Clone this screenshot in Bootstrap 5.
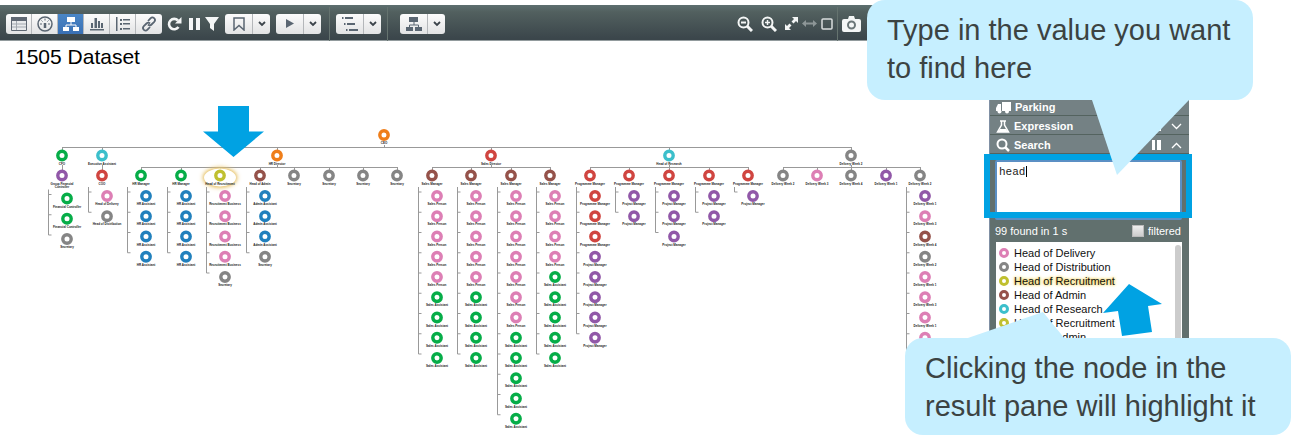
<!DOCTYPE html>
<html lang="en">
<head>
<meta charset="utf-8">
<meta name="viewport" content="width=device-width, initial-scale=1">
<title>1505 Dataset</title>
<link href="https://cdn.jsdelivr.net/npm/bootstrap@5.3.0/dist/css/bootstrap.min.css" rel="stylesheet">
<style>
  body { font-family: "Liberation Sans", Arial, sans-serif; background: #fff; color: #000; }
  svg { display: block; }
  .stage { padding: 5px 102px 0 0; min-height: 100vh; overflow: hidden; }

  /* toolbar */
  .toolbar { height: 36px; padding: 2px 328px 0 6px; background: linear-gradient(#5d6f6f, #52605f 20%, #3b464b 95%); border-bottom: 1px solid #929b9d; }
  .toolbar .btn { height: 20px; padding: 0; display: flex; align-items: center; justify-content: center; border: 0; border-right: 1px solid #b4b7ba; border-radius: 0; background: linear-gradient(#fcfcfc, #e2e3e4); color: #5a6672; }
  .toolbar .btn-group { border-radius: 3px; overflow: hidden; }
  .toolbar .btn-group > .btn + .btn.btn { margin-left: 0; }
  .toolbar .btn-group .btn:last-child { border-right: 0; }
  .toolbar .btn.active { background: linear-gradient(#4a86c6, #3a70b4); color: #fff; }
  .tool { width: 26px; flex: none; }
  .tool-main { width: 28px; flex: none; }
  .tool-drop { width: 17px; flex: none; }
  .toolbar .bare { background: none; border: 0; color: #f4f6f6; }
  .divider { width: 1px; height: 34px; background: #65736f; }
  .near { margin-left: 6px; }
  .apart { margin-left: 12px; }

  /* chart */
  .chart-title { font-size: 21px; line-height: 24px; height: 59px; padding: 4px 0 0 15px; margin: 0; }
  .chart { min-width: 0; }
  .chart text { font: bold 3px "Liberation Sans", Arial, sans-serif; text-anchor: middle; fill: #222; }
  .chart .link-line { fill: none; stroke: #999; stroke-width: 1; }
  .halo { fill: #fff; filter: drop-shadow(0 0 2px #e3b84c) drop-shadow(0 0 2px #ecd08a); }

  /* side panel */
  .side { width: 200px; flex: none; margin-top: 56px; color: #fff; font-size: 11px; background: #61706e; border-left: 1px solid #8090a4; align-self: flex-start; }
  .side-head { height: 19px; padding: 2px 7px 0 6px; font-weight: bold; background: #748184; border-bottom: 1px solid #54635f; }
  .side-head button { color: #fff; background: none; border: 0; padding: 0; }
  .search-box { padding: 6px 7px 0 5px; }
  .query { display: block; width: 100%; height: 60px; resize: none; padding: 4px 2px; border: 2px solid #5b8fc4; border-radius: 2px; font: 11px/13px "Liberation Mono", monospace; color: #222; outline: 0; }
  .caret { left: 36px; top: 12px; width: 1px; height: 11px; background: #000; }
  .focus-frame { left: -6px; right: -3px; top: 0; height: 64px; border: 6px solid #00a2e3; }
  .status { height: 22px; padding: 0 8px 0 5px; line-height: 22px; }
  .filter-check { appearance: none; width: 12px; height: 12px; margin: 0; background: linear-gradient(#eee, #ccc); border: 1px solid #bbb; }
  .hits { height: 120px; margin: 0 7px 0 6px; padding: 4px 0 0 3px; background: #fff; color: #111; overflow: hidden; }
  .hits a { display: flex; align-items: center; gap: 5px; line-height: 14px; height: 14px; color: #111; text-decoration: none; }
  .hits a::before { content: ""; width: 10px; height: 10px; border: 3px solid var(--ring); border-radius: 50%; }
  .hits a.picked span { text-shadow: 0 0 2px #f0d050, 0 0 3px #f4dc80, 0 0 4px #f4dc80; }
  .thumb { right: 8px; top: 148px; width: 6px; height: 112px; border-radius: 3px; background: #ccc; }
  .pointer { left: 112px; top: 187px; }

  /* callouts */
  .callout { width: 386px; padding: 11px 20px; font-size: 29px; line-height: 38px; color: #3c4342; background: #c6efff; border-radius: 18px; z-index: 5; }
  .callout-type { right: 38px; top: 0; height: 100px; }
  .callout-click { right: 0; top: 338px; height: 97px; }
  .callout svg { fill: #c6efff; }
  .tail-down { left: 225px; top: 99px; }
  .tail-up { left: 60px; top: -26px; }
</style>
</head>
<body>
<div class="stage position-relative">
  <header class="toolbar d-flex align-items-center">
    <div class="btn-group">
      <button class="btn tool" aria-label="Table"><svg width="16" height="14"><path d="M.5.5h15v13H.5z" fill="#e8eaec" stroke="#5f6873"/><path d="M0 0h16v4H0z" fill="#5f6873"/><path d="M1 7h14M1 10h14M5.500 4v9" stroke="#a2a8af"/></svg></button>
      <button class="btn tool" aria-label="Dashboard"><svg width="16" height="16" fill="none" stroke="currentColor"><circle cx="8" cy="8" r="7" stroke-width="1.500"/><path d="M8 7v5" stroke-width="2.500"/><path d="M8 2.500v2M3 8h2M11 8h2M4.500 4.500l1 1M11.500 4.500l-1 1"/></svg></button>
      <button class="btn tool active" aria-label="Chart"><svg width="16" height="14" fill="currentColor"><path d="M4 0h8v5H4zM0 10h6v4H0zM10 10h6v4h-6z"/><path d="M8 5v3M3 10V8h10v2" fill="none" stroke="currentColor"/></svg></button>
      <button class="btn tool" aria-label="Bars"><svg width="14" height="14" fill="currentColor"><path d="M0 12h14v1.500H0zM1 6h2v5H1zM4.500 1h2.500v10H4.500zM8 4h2v7H8zM11 6h2v5h-2z"/></svg></button>
      <button class="btn tool" aria-label="List"><svg width="16" height="14" fill="currentColor"><path d="M1 0h1.500v14H1zM5 2h2v2H5zM5 6h2v2H5zM5 11h2v2H5zM8 2h7v1.500H8zM8 6h7v1.500H8zM8 11h7v1.500H8z"/></svg></button>
      <button class="btn tool" aria-label="Link"><svg width="16" height="16" viewBox="0 0 16 16" fill="none" stroke="currentColor" stroke-width="1.800"><path d="M7 5l2.500-2.700a2.500 2.500 0 013.700 3.500L10.500 8.500a2.500 2.500 0 01-3.500 0M9 11l-2.500 2.700a2.500 2.500 0 01-3.700-3.500L5.500 7.500a2.500 2.500 0 013.500 0"/></svg></button>
    </div>
    <button class="btn bare ms-1" aria-label="Refresh"><svg width="17" height="16" viewBox="0 0 17 16"><path d="M12.500 11A5.200 5.200 0 1112 4.500" fill="none" stroke="currentColor" stroke-width="2.600"/><path d="M15.500 1v6.500H9z" fill="currentColor"/></svg></button>
    <button class="btn bare ms-1" aria-label="Pause"><svg width="14" height="12" fill="currentColor"><path d="M2 0h4v12H2zM9 0h4v12H9z"/></svg></button>
    <button class="btn bare ms-1" aria-label="Filter"><svg width="14" height="14" fill="currentColor"><path d="M0 0h14L9 7v7l-4-3V7z"/></svg></button>
    <div class="btn-group near">
      <button class="btn tool-main" aria-label="Bookmark"><svg width="12" height="14" fill="none" stroke="currentColor" stroke-width="1.500"><path d="M1 1h10v12L6 8.500 1 13z"/></svg></button>
      <button class="btn tool-drop" aria-label="Bookmarks"><svg width="8" height="6"><path d="M1 1l3 3 3-3" fill="none" stroke="#3c444b" stroke-width="1.800"/></svg></button>
    </div>
    <div class="btn-group near">
      <button class="btn tool-main" aria-label="Play"><svg width="8" height="9" fill="currentColor"><path d="M0 0l8 4.500L0 9z"/></svg></button>
      <button class="btn tool-drop" aria-label="Play options"><svg width="8" height="6"><path d="M1 1l3 3 3-3" fill="none" stroke="#3c444b" stroke-width="1.800"/></svg></button>
    </div>
    <div class="divider ms-2"></div>
    <div class="btn-group near">
      <button class="btn tool-main" aria-label="Outline"><svg width="16" height="14" fill="currentColor"><path d="M0 0h1.500v2H0zM3 0h8v2H3zM2 6h1.500v2H2zM5 6h8v2H5zM4 12h1.500v2H4zM7 12h9v2H7z"/></svg></button>
      <button class="btn tool-drop" aria-label="Outline levels"><svg width="8" height="6"><path d="M1 1l3 3 3-3" fill="none" stroke="#3c444b" stroke-width="1.800"/></svg></button>
    </div>
    <div class="divider near"></div>
    <div class="btn-group apart">
      <button class="btn tool-main" aria-label="Layout"><svg width="16" height="14" fill="currentColor"><path d="M3 0h9v5H3zM0 10h7v4H0zM9 10h7v4H9z"/><path d="M8 5v3M3.500 10V8h9v2" fill="none" stroke="currentColor"/></svg></button>
      <button class="btn tool-drop" aria-label="Layouts"><svg width="8" height="6"><path d="M1 1l3 3 3-3" fill="none" stroke="#3c444b" stroke-width="1.800"/></svg></button>
    </div>
    <div class="d-flex align-items-center ms-auto">
      <button class="btn bare me-2" aria-label="Zoom out"><svg width="16" height="16" fill="none" stroke="currentColor" stroke-width="2"><circle cx="6.500" cy="6.500" r="5"/><path d="M4 6.500h5"/><path d="M10 10l5 5" stroke-width="3"/></svg></button>
      <button class="btn bare me-2" aria-label="Zoom in"><svg width="16" height="16" fill="none" stroke="currentColor" stroke-width="2"><circle cx="6.500" cy="6.500" r="5"/><path d="M4 6.500h5M6.500 4v5" stroke-width="1.500"/><path d="M10 10l5 5" stroke-width="3"/></svg></button>
      <button class="btn bare me-1" aria-label="Fit"><svg width="13" height="13" fill="currentColor"><path d="M7 0h6v6l-2-2-2.500 2.500-2-2L9 2zM6 13H0V7l2 2 2.500-2.500 2 2L4 11z"/></svg></button>
      <button class="btn bare" aria-label="Fit width"><svg width="15" height="7" fill="#8d9697"><path d="M0 3.500L4 0v2.500h7V0l4 3.500L11 7V4.500H4V7z"/></svg></button>
      <button class="btn bare ms-1" aria-label="Full screen"><svg width="12" height="12"><rect x="1" y="1" width="10" height="10" rx="1" fill="none" stroke="#d9dddd" stroke-width="1.500"/></svg></button>
      <div class="divider mx-1"></div>
      <button class="btn bare" aria-label="Snapshot"><svg width="19" height="16"><path d="M2 3h4l1-3h5l1 3h4a2 2 0 012 2v9a2 2 0 01-2 2H2a2 2 0 01-2-2V5a2 2 0 012-2z" fill="currentColor"/><circle cx="9.500" cy="9" r="3.500" fill="none" stroke="#6b7678" stroke-width="2"/></svg></button>
    </div>
  </header>

  <main class="d-flex">
    <section class="chart flex-grow-1">
      <h1 class="chart-title">1505 Dataset</h1>
      <svg id="tree" viewBox="0 100 989 341" width="100%" role="img" aria-label="Organisation chart"></svg>
    </section>

    <aside class="side position-relative">
      <div class="side-head d-flex align-items-center gap-1">
        <svg width="15" height="13" fill="#fff"><path d="M15 1v9H6V1zM5 3v7H0V7l2-4z"/><circle cx="3.500" cy="10.500" r="2"/><circle cx="11" cy="10.500" r="2"/></svg>
        <span>Parking</span>
      </div>
      <div class="side-head d-flex align-items-center gap-1">
        <svg width="14" height="13" fill="none" stroke="#fff" stroke-width="1.500"><path d="M4 1h6M5.500 1v4L1.500 12h11L8.500 5V1"/><path d="M4 9h6l2 3H2z" fill="#fff" stroke="none"/></svg>
        <span>Expression</span>
        <button class="ms-auto me-1" aria-label="Pause expression"><svg width="12" height="10" fill="#fff"><path d="M1 0h3v10H1zM6 0h4v10H6z"/></svg></button>
        <button aria-label="Expand expression"><svg width="11" height="7"><path d="M1 1l4.500 4.500L10 1" fill="none" stroke="#fff" stroke-width="1.300"/></svg></button>
      </div>
      <div class="side-head d-flex align-items-center gap-1">
        <svg width="14" height="14" fill="none" stroke="#fff" stroke-width="2"><circle cx="6" cy="6" r="4.500"/><path d="M9.500 9.500L13 13" stroke-width="2.500"/></svg>
        <label for="query">Search</label>
        <button class="ms-auto me-1" aria-label="Pause search"><svg width="12" height="10" fill="#fff"><path d="M1 0h3v10H1zM6 0h4v10H6z"/></svg></button>
        <button aria-label="Collapse search"><svg width="11" height="7"><path d="M1 6l4.500-4.500L10 6" fill="none" stroke="#fff" stroke-width="1.300"/></svg></button>
      </div>
      <div class="position-relative">
        <div class="search-box"><textarea class="query" id="query" spellcheck="false">head</textarea></div>
        <div class="caret position-absolute"></div>
        <div class="focus-frame position-absolute pe-none"></div>
      </div>
      <div class="status d-flex align-items-center">
        <span>99 found in 1 s</span>
        <input class="filter-check ms-auto me-1" type="checkbox" id="filtered"><label for="filtered">filtered</label>
      </div>
      <nav class="hits" aria-label="Results">
        <a href="#" style="--ring:#dd7fb5"><span>Head of Delivery</span></a>
        <a href="#" style="--ring:#858585"><span>Head of Distribution</span></a>
        <a href="#" class="picked" style="--ring:#c0c030"><span>Head of Recruitment</span></a>
        <a href="#" style="--ring:#95524a"><span>Head of Admin</span></a>
        <a href="#" style="--ring:#3cbfcb"><span>Head of Research</span></a>
        <a href="#" style="--ring:#c0c030"><span>Head of Recruitment</span></a>
        <a href="#" style="--ring:#95524a"><span>Head of Admin</span></a>
      </nav>
      <div class="thumb position-absolute"></div>
      <svg class="pointer position-absolute" width="60" height="53" fill="#00a2e3"><path d="M27 0L60 20 46 22 50 48 20 52 16 27 1 29z"/></svg>
    </aside>
  </main>

  <div class="callout callout-type position-absolute">Type in the value you want to find here
    <svg class="tail-down position-absolute" width="97" height="76"><path d="M0 0h97v1L25 76 0 1z"/></svg>
  </div>
  <div class="callout callout-click position-absolute">Clicking the node in the result pane will highlight it
    <svg class="tail-up position-absolute" width="105" height="27"><path d="M0 27L78 0l22 27z"/></svg>
  </div>
</div>

<script src="https://cdn.jsdelivr.net/npm/bootstrap@5.3.0/dist/js/bootstrap.bundle.min.js"></script>
<script>
  const C = { green: '#06ad48', teal: '#3cbfcb', orange: '#ef7e1a', red: '#d04540', grey: '#858585', purple: '#9158a8', blue: '#2180bd', olive: '#c0c030', brown: '#95524a', pink: '#dd7fb5' };
  const rep = (n, color, label) => Array(n).fill([color, label]);
  const delivery = (color, n) => [color, 'Delivery Week ' + n];
  // each branch: x, colour, label, then its columns: x, colour, label, stacked reports, whether the stack goes on
  const branches = [
    [62, 'green', 'CFO', [[62, 'purple', 'Group Financial|Controller', [...rep(2, 'green', 'Financial Controller'), ['grey', 'Secretary']]]]],
    [102, 'teal', 'Executive Assistant', [[102, 'red', 'COO', [['pink', 'Head of Delivery'], ['grey', 'Head of Distribution']]]]],
    [277, 'orange', 'HR Director', [
      [141, 'green', 'HR Manager', rep(4, 'blue', 'HR Assistant')],
      [181, 'green', 'HR Manager', rep(4, 'blue', 'HR Assistant')],
      [220, 'olive', 'Head of Recruitment', [...rep(4, 'pink', 'Recruitment Business'), ['grey', 'Secretary']]],
      [260, 'brown', 'Head of Admin', [...rep(3, 'blue', 'Admin Assistant'), ['grey', 'Secretary']]],
      ...[294, 329, 363, 397].map(x => [x, 'grey', 'Secretary', []])]],
    [491, 'red', 'Sales Director', [[432, 5, 4], [471, 5, 4], [511, 7, 5], [550, 4, 5]].map(([x, p, a]) =>
      [x, 'brown', 'Sales Manager', [...rep(p, 'pink', 'Sales Person'), ...rep(a, 'green', 'Sales Assistant')]])],
    [669, 'teal', 'Head of Research', [[590, 3, 5], [629, 0, 2], [669, 0, 3], [709, 0, 2], [748, 0, 1]].map(([x, g, p]) =>
      [x, 'red', 'Programme Manager', [...rep(g, 'red', 'Programme Manager'), ...rep(p, 'purple', 'Project Manager')]])],
    [851, 'grey', 'Delivery Week 2', [
      [783, ...delivery('grey', 2), []], [817, ...delivery('pink', 3), []], [851, ...delivery('grey', 4), []], [886, ...delivery('purple', 1), []],
      [920, ...delivery('grey', 2), [['purple', 1], ['pink', 3], ['brown', 4], ['grey', 2], ['pink', 1], ['pink', 3], ['pink', 1], ['pink', 3]].map(d => delivery(...d)), true]]]
  ];
  let lines = '', nodes = '';
  const line = d => lines += `<path class="link-line" d="${d}"/>`;
  const node = (x, y, color, label) => {
    if (label === 'Head of Recruitment') nodes += `<ellipse class="halo" cx="${x}" cy="${y + 2}" rx="16" ry="9"/>`;
    nodes += `<circle cx="${x}" cy="${y}" r="4.2" fill="#fff" stroke="${C[color]}" stroke-width="3.4"/>`;
    label.split('|').forEach((t, i) => nodes += `<text x="${x}" y="${y + 9 + i * 3}">${t}</text>`);
  };
  line('M62 147.500H852');
  line('M384.500 145v3');
  node(384, 135, 'orange', 'CEO');
  for (const [bx, bc, bl, cols] of branches) {
    line(`M${bx + .5} 147v4M${bx + .5} 165v3`);
    node(bx, 155.500, bc, bl);
    if (cols.length > 1) line(`M${cols[0][0]} 167.500H${cols[cols.length - 1][0] + 1}`);
    for (const [x, c, l, kids, more] of cols) {
      line(`M${x + .5} 167v3`);
      node(x, 175.500, c, l);
      const drop = l.includes('|') ? 2.500 : 0;
      kids.forEach(([kc, kl], i) => {
        const y = 196 + drop + i * 20.250;
        line(`M${x - 13.500} ${y - 4}h3`);
        node(x + 5, y, kc, kl);
      });
      if (kids.length) line(`M${x - 13.500} ${187 + drop}V${192 + drop + (kids.length - (more ? 0 : 1)) * 20.250}`);
    }
  }
  // marker over the highlighted node
  nodes += '<path fill="#00a2e3" d="M218 106h31v25.500h15L233.500 157 203 131.500h15z"/>';
  document.getElementById('tree').innerHTML = lines + nodes;
</script>
</body>
</html>
